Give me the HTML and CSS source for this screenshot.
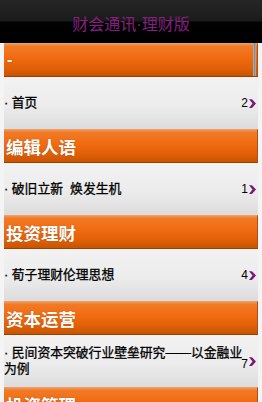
FILE: index.html
```html
<!DOCTYPE html>
<html lang="zh-CN">
<head>
<meta charset="utf-8">
<title>财会通讯·理财版</title>
<link rel="stylesheet" href="styles.css">
</head>
<body>
<div class="app">
  <header class="titlebar">财会通讯·理财版</header>
  <div class="list">
    <div class="section dash">-</div>
    <div class="item">
      <span class="label">· 首页</span>
      <span class="count">2</span>
      <svg class="chev" viewBox="0 0 8 10"><polygon points="0,0 3.4,0 8,5 3.4,10 0,10 4,5"/></svg>
    </div>
    <div class="section">编辑人语</div>
    <div class="item">
      <span class="label">· 破旧立新&nbsp; 焕发生机</span>
      <span class="count">1</span>
      <svg class="chev" viewBox="0 0 8 10"><polygon points="0,0 3.4,0 8,5 3.4,10 0,10 4,5"/></svg>
    </div>
    <div class="section">投资理财</div>
    <div class="item">
      <span class="label">· 荀子理财伦理思想</span>
      <span class="count">4</span>
      <svg class="chev" viewBox="0 0 8 10"><polygon points="0,0 3.4,0 8,5 3.4,10 0,10 4,5"/></svg>
    </div>
    <div class="section">资本运营</div>
    <div class="item">
      <span class="label">· 民间资本突破行业壁垒研究<span class="dashes">——</span>以金融业<br>为例</span>
      <span class="count low">7</span>
      <svg class="chev" viewBox="0 0 8 10"><polygon points="0,0 3.4,0 8,5 3.4,10 0,10 4,5"/></svg>
    </div>
    <div class="section">投资管理</div>
  </div>
  <div class="scroll-thumb"></div>
</div>
</body>
</html>
```

FILE: styles.css
```css
html, body {
  margin: 0;
  padding: 0;
  background: #f4f4f4;
  overflow: hidden;
}

.app {
  position: relative;
  width: 262px;
  height: 402px;
  overflow: hidden;
  font-family: "Liberation Sans", "Noto Sans CJK SC", sans-serif;
}

.titlebar {
  height: 43px;
  box-sizing: border-box;
  padding-top: 3px;
  display: flex;
  align-items: center;
  justify-content: center;
  background: linear-gradient(to bottom, #262626 0%, #1b1b1b 48%, #020202 52%, #000 100%);
  color: #84207f;
  font-size: 16px;
}

.list {
  margin-left: 4px;
  width: 254px;
  display: flex;
  flex-direction: column;
}

.section {
  height: 34px;
  box-sizing: border-box;
  padding-left: 2px;
  display: flex;
  align-items: center;
  color: #fff;
  font-size: 17.5px;
  font-weight: 700;
  text-shadow: 0 0 1px rgba(130, 50, 0, 0.7);
  background: linear-gradient(to bottom, #f39450 0%, #f27a26 8%, #f06a10 45%, #e06008 75%, #c85400 100%);
  border-top: 1px solid #e8a070;
  border-bottom: 1px solid #9a4000;
  border-right: 1px solid #a85020;
}

.section.dash {
  padding-left: 3px;
  font-size: 16px;
}

.item {
  height: 52px;
  box-sizing: border-box;
  display: flex;
  align-items: center;
  background: linear-gradient(to bottom, #f2f2f2 0%, #ececec 55%, #dcdcdc 100%);
  color: #000;
}

.label {
  flex: 1;
  min-width: 0;
  white-space: nowrap;
  font-size: 12.8px;
  line-height: 16px;
  -webkit-text-stroke: 0.3px #000;
}

.dashes {
  letter-spacing: 0;
}

.count {
  font-size: 12px;
  color: #000;
  margin-right: 1px;
}

.count.low {
  margin-top: 5px;
}

.chev {
  width: 7px;
  height: 9px;
  margin-right: 2px;
  fill: #7a1a72;
}

.scroll-thumb {
  position: absolute;
  top: 43px;
  left: 253px;
  width: 3px;
  height: 33px;
  background: linear-gradient(to right, #b8b8b8, #8c8c8c, #b0b0b0);
}
```
